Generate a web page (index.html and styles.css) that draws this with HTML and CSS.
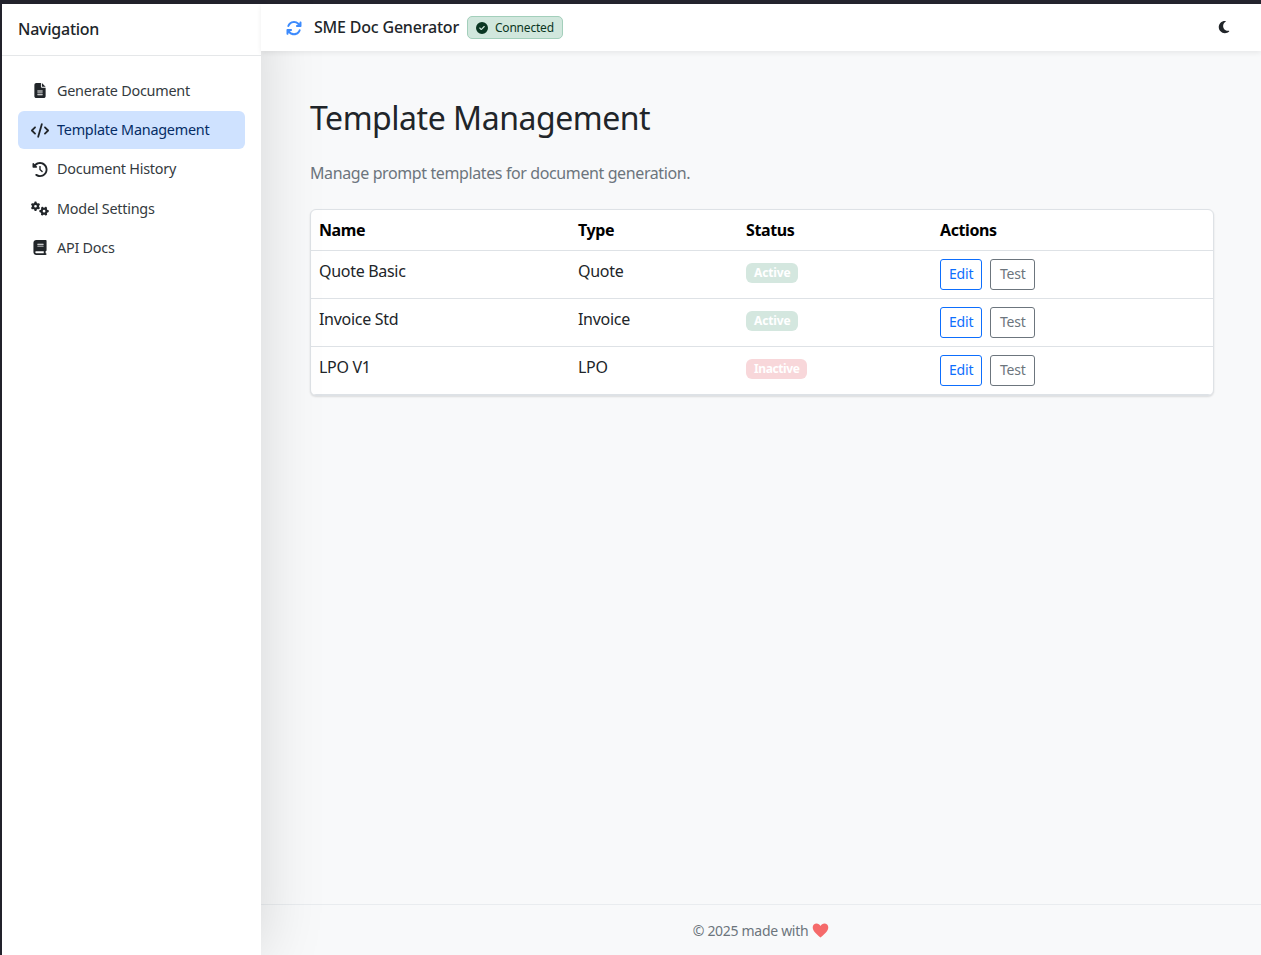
FILE: index.html
```html
<!DOCTYPE html>
<html>
<head>
    <title>SME Doc Generator</title>
    <link rel="stylesheet" href="styles.css">
</head>
<body>
    <div class="app">
        <!-- Sidebar -->
        <aside class="sidebar">
            <div class="sidebar-head">Navigation</div>
            <nav class="nav-list">
                <a class="nav-item" href="#">
                    <svg class="nav-icon" viewBox="0 0 384 512"><path d="M64 0C28.7 0 0 28.7 0 64V448c0 35.3 28.7 64 64 64H320c35.3 0 64-28.7 64-64V160H256c-17.7 0-32-14.3-32-32V0H64zM256 0V128H384L256 0zM112 256H272c8.8 0 16 7.2 16 16s-7.2 16-16 16H112c-8.8 0-16-7.2-16-16s7.2-16 16-16zm0 64H272c8.8 0 16 7.2 16 16s-7.2 16-16 16H112c-8.8 0-16-7.2-16-16s7.2-16 16-16zm0 64H272c8.8 0 16 7.2 16 16s-7.2 16-16 16H112c-8.8 0-16-7.2-16-16s7.2-16 16-16z"/></svg>
                    Generate Document
                </a>
                <a class="nav-item active" href="#">
                    <svg class="nav-icon" viewBox="0 0 640 512"><path d="M392.8 1.2c-17-4.9-34.7 5-39.6 22l-128 448c-4.9 17 5 34.7 22 39.6s34.7-5 39.6-22l128-448c4.9-17-5-34.7-22-39.6zm80.6 120.1c-12.5 12.5-12.5 32.8 0 45.3L562.7 256l-89.4 89.4c-12.5 12.5-12.5 32.8 0 45.3s32.8 12.5 45.3 0l112-112c12.5-12.5 12.5-32.8 0-45.3l-112-112c-12.5-12.5-32.8-12.5-45.3 0zm-306.7 0c-12.5-12.5-32.8-12.5-45.3 0l-112 112c-12.5 12.5-12.5 32.8 0 45.3l112 112c12.5 12.5 32.8 12.5 45.3 0s12.5-32.8 0-45.3L77.3 256l89.4-89.4c12.5-12.5 12.5-32.8 0-45.3z"/></svg>
                    Template Management
                </a>
                <a class="nav-item" href="#">
                    <svg class="nav-icon" viewBox="0 0 512 512"><path d="M75 75L41 41C25.9 25.9 0 36.6 0 57.9V168c0 13.3 10.7 24 24 24H134.1c21.4 0 32.1-25.9 17-41l-30.8-30.8C155 85.5 203 64 256 64c106 0 192 86 192 192s-86 192-192 192c-40.8 0-78.6-12.7-109.7-34.4c-14.5-10.1-34.4-6.6-44.6 7.9s-6.6 34.4 7.9 44.6C151.2 495 201.7 512 256 512c141.4 0 256-114.6 256-256S397.4 0 256 0C185.3 0 121.3 28.7 75 75zm181 53c-13.3 0-24 10.7-24 24V256c0 6.4 2.5 12.5 7 17l72 72c9.4 9.4 24.6 9.4 33.9 0s9.4-24.6 0-33.9l-65-65V152c0-13.3-10.7-24-24-24z"/></svg>
                    Document History
                </a>
                <a class="nav-item" href="#">
                    <svg class="nav-icon" viewBox="0 0 640 512"><path d="M308.5 135.3c7.1-6.3 9.9-16.2 6.2-25c-2.3-5.3-4.8-10.5-7.6-15.5L304 89.4c-3-5-6.3-9.9-9.8-14.6c-5.7-7.6-15.7-10.1-24.7-7.1l-28.2 9.3c-10.7-8.8-23-16-36.2-20.9L199 27.1c-1.9-9.3-9.1-16.7-18.5-17.8C173.9 8.4 167.2 8 160.4 8h-.7c-6.8 0-13.5 .4-20.1 1.2c-9.4 1.1-16.6 8.6-18.5 17.8L115 56.1c-13.3 5-25.5 12.1-36.2 20.9L50.5 67.8c-9-3-19-.5-24.7 7.1c-3.5 4.7-6.8 9.6-9.9 14.6l-3 5.3c-2.8 5-5.3 10.2-7.6 15.6c-3.7 8.7-.9 18.6 6.2 25l22.2 19.8C32.6 161.9 32 168.9 32 176s.6 14.1 1.7 20.9L11.5 216.7c-7.1 6.3-9.9 16.2-6.2 25c2.3 5.3 4.8 10.5 7.6 15.6l3 5.2c3 5.1 6.3 9.9 9.9 14.6c5.7 7.6 15.7 10.1 24.7 7.1l28.2-9.3c10.7 8.8 23 16 36.2 20.9l6.1 29.1c1.9 9.3 9.1 16.7 18.5 17.8c6.7 .8 13.5 1.2 20.4 1.2s13.7-.4 20.4-1.2c9.4-1.1 16.6-8.6 18.5-17.8l6.1-29.1c13.3-5 25.5-12.1 36.2-20.9l28.2 9.3c9 3 19 .5 24.7-7.1c3.5-4.7 6.8-9.5 9.8-14.6l3.1-5.4c2.8-5 5.3-10.2 7.6-15.5c3.7-8.7 .9-18.6-6.2-25l-22.2-19.8c1.1-6.8 1.7-13.8 1.7-20.9s-.6-14.1-1.7-20.9l22.2-19.8zM112 176a48 48 0 1 1 96 0 48 48 0 1 1 -96 0zM504.7 500.5c6.3 7.1 16.2 9.9 25 6.2c5.3-2.3 10.5-4.8 15.5-7.6l5.4-3.1c5-3 9.9-6.3 14.6-9.8c7.6-5.7 10.1-15.7 7.1-24.7l-9.3-28.2c8.8-10.7 16-23 20.9-36.2l29.1-6.1c9.3-1.9 16.7-9.1 17.8-18.5c.8-6.7 1.2-13.5 1.2-20.4s-.4-13.7-1.2-20.4c-1.1-9.4-8.6-16.6-17.8-18.5L583.9 307c-5-13.3-12.1-25.5-20.9-36.2l9.3-28.2c3-9 .5-19-7.1-24.7c-4.7-3.5-9.6-6.8-14.6-9.9l-5.3-3c-5-2.8-10.2-5.3-15.6-7.6c-8.7-3.7-18.6-.9-25 6.2l-19.8 22.2c-6.8-1.1-13.8-1.7-20.9-1.7s-14.1 .6-20.9 1.7l-19.8-22.2c-6.3-7.1-16.2-9.9-25-6.2c-5.3 2.3-10.5 4.8-15.6 7.6l-5.2 3c-5.1 3-9.9 6.3-14.6 9.9c-7.6 5.7-10.1 15.7-7.1 24.7l9.3 28.2c-8.8 10.7-16 23-20.9 36.2L315.1 313c-9.3 1.9-16.7 9.1-17.8 18.5c-.8 6.7-1.2 13.5-1.2 20.4s.4 13.7 1.2 20.4c1.1 9.4 8.6 16.6 17.8 18.5l29.1 6.1c5 13.3 12.1 25.5 20.9 36.2l-9.3 28.2c-3 9-.5 19 7.1 24.7c4.7 3.5 9.5 6.8 14.6 9.8l5.4 3.1c5 2.8 10.2 5.3 15.5 7.6c8.7 3.7 18.6 .9 25-6.2l19.8-22.2c6.8 1.1 13.8 1.7 20.9 1.7s14.1-.6 20.9-1.7l19.8 22.2zM464 304a48 48 0 1 1 0 96 48 48 0 1 1 0-96z"/></svg>
                    Model Settings
                </a>
                <a class="nav-item" href="#">
                    <svg class="nav-icon" viewBox="0 0 448 512"><path d="M96 0C43 0 0 43 0 96V416c0 53 43 96 96 96H384h32c17.7 0 32-14.3 32-32s-14.3-32-32-32V384c17.7 0 32-14.3 32-32V32c0-17.7-14.3-32-32-32H384 96zm0 384H352v64H96c-17.7 0-32-14.3-32-32s14.3-32 32-32zm32-240c0-8.8 7.2-16 16-16H336c8.8 0 16 7.2 16 16s-7.2 16-16 16H144c-8.8 0-16-7.2-16-16zm16 48H336c8.8 0 16 7.2 16 16s-7.2 16-16 16H144c-8.8 0-16-7.2-16-16s7.2-16 16-16z"/></svg>
                    API Docs
                </a>
            </nav>
        </aside>

        <div class="main-wrap">
            <header class="topbar">
                <svg class="sync-icon" viewBox="0 0 512 512"><path d="M142.9 142.9c62.2-62.2 162.7-62.2 224.9 0L384 160H352c-17.7 0-32 14.3-32 32s14.3 32 32 32H463.5h.4c17.7 0 32-14.3 32-32V80c0-17.7-14.3-32-32-32s-32 14.3-32 32v35.2L414.4 97.6c-87.5-87.5-229.3-87.5-316.8 0C73.2 122 55.6 150.7 44.8 181.4c-5.9 16.7 2.9 34.9 19.5 40.8s34.9-2.9 40.8-19.5c7.7-21.8 20.2-42.3 37.8-59.8zM16 312v7.6 .7V440c0 17.7 14.3 32 32 32s32-14.3 32-32V404.8l17.6 17.5c87.5 87.4 229.3 87.4 316.7 0c24.4-24.4 42.1-53.1 52.9-83.7c5.9-16.7-2.9-34.9-19.5-40.8s-34.9 2.9-40.8 19.5c-7.7 21.8-20.2 42.3-37.8 59.8c-62.2 62.2-162.7 62.2-224.9 0L128 352h32c17.7 0 32-14.3 32-32s-14.3-32-32-32H48.4h-.6C30.3 288 16 302.3 16 320v-8z"/></svg>
                <span class="app-title">SME Doc Generator</span>
                <span class="conn-badge">
                    <svg class="conn-icon" viewBox="0 0 512 512"><path d="M256 512A256 256 0 1 0 256 0a256 256 0 1 0 0 512zM369 209L241 337c-9.4 9.4-24.6 9.4-33.9 0l-64-64c-9.4-9.4-9.4-24.6 0-33.9s24.6-9.4 33.9 0l47 47L335 175c9.4-9.4 24.6-9.4 33.9 0s9.4 24.6 0 33.9z"/></svg>
                    Connected
                </span>
                <svg class="moon-icon" viewBox="0 0 384 512"><path d="M223.5 32C100 32 0 132.3 0 256S100 480 223.5 480c60.6 0 115.5-24.2 155.8-63.4c5-4.9 6.3-12.5 3.1-18.7s-10.1-9.7-17-8.5c-9.8 1.7-19.8 2.6-30.1 2.6c-96.9 0-175.5-78.8-175.5-176c0-65.8 36-123.1 89.3-153.3c6.1-3.5 9.2-10.5 7.7-17.3s-7.3-11.9-14.3-12.5c-6.3-.5-12.6-.8-19-.8z"/></svg>
            </header>

            <main class="content">
                <h1>Template Management</h1>
                <p class="lead">Manage prompt templates for document generation.</p>

                <div class="table-card">
                    <table>
                        <thead>
                            <tr>
                                <th class="col-name">Name</th>
                                <th class="col-type">Type</th>
                                <th class="col-status">Status</th>
                                <th>Actions</th>
                            </tr>
                        </thead>
                        <tbody>
                            <tr>
                                <td>Quote Basic</td>
                                <td>Quote</td>
                                <td><span class="badge badge-on">Active</span></td>
                                <td><button class="btn btn-edit">Edit</button><button class="btn btn-test">Test</button></td>
                            </tr>
                            <tr>
                                <td>Invoice Std</td>
                                <td>Invoice</td>
                                <td><span class="badge badge-on">Active</span></td>
                                <td><button class="btn btn-edit">Edit</button><button class="btn btn-test">Test</button></td>
                            </tr>
                            <tr>
                                <td>LPO V1</td>
                                <td>LPO</td>
                                <td><span class="badge badge-off">Inactive</span></td>
                                <td><button class="btn btn-edit">Edit</button><button class="btn btn-test">Test</button></td>
                            </tr>
                        </tbody>
                    </table>
                </div>
            </main>

            <footer class="footer">
                <span class="footer-text">© 2025 made with</span>
                <svg class="heart" viewBox="0 0 24 24"><path d="M12 22C9 19 1 14 1 7.500 1 4 3.600 2 6.400 2 8.800 2 10.900 3.300 12 5.500 13.100 3.300 15.200 2 17.600 2 20.400 2 23 4 23 7.500 23 14 15 19 12 22z"/></svg>
            </footer>
        </div>
    </div>
</body>
</html>
```

FILE: styles.css
```css
* {
    box-sizing: border-box;
}
html, body {
    height: 100%;
}
body {
    margin: 0;
    background: #24242e;
    padding: 4px 0 0 2px;
    overflow: hidden;
    color: #212529;
    font-family: "Noto Sans", sans-serif;
    font-size: 16px;
    line-height: 1.5;
}
.app {
    display: flex;
    height: 100%;
}

/* Sidebar */
.sidebar {
    width: 259px;
    flex-shrink: 0;
    background: #fff;
    box-shadow: 0 0 60px rgba(0, 0, 0, 0.15);
    position: relative;
    z-index: 2;
}
.sidebar-head {
    height: 52px;
    padding: 13px 16px 0;
    border-bottom: 1px solid #e5e7e9;
    font-weight: 500;
    letter-spacing: -0.25px;
}
.nav-list {
    padding: 16px;
}
.nav-item {
    display: flex;
    align-items: center;
    padding: 8px 12px 8px 13px;
    margin-bottom: 1.6px;
    border-radius: 6px;
    color: #343a40;
    font-size: 14.4px;
    letter-spacing: -0.24px;
    text-decoration: none;
}
.nav-item.active {
    background: #cfe2ff;
    color: #052c65;
}
.nav-icon {
    width: 18px;
    height: 15px;
    margin-right: 8px;
    fill: #212529;
}

/* Top bar */
.main-wrap {
    flex: 1;
    min-width: 0;
    display: flex;
    flex-direction: column;
    background: #f8f9fa;
}
.topbar {
    height: 47px;
    flex-shrink: 0;
    display: flex;
    align-items: center;
    padding: 0 31px 0 25px;
    background: #fff;
    box-shadow: 0 2px 5px rgba(0, 0, 0, 0.07);
    position: relative;
    z-index: 3;
}
.sync-icon {
    width: 16px;
    height: 16px;
    margin-right: 12px;
    fill: #3d8bfd;
}
.app-title {
    font-weight: 500;
    letter-spacing: -0.2px;
    margin-right: 8px;
    padding-bottom: 2px;
}
.conn-badge {
    display: flex;
    align-items: center;
    height: 23px;
    padding: 0 8px;
    background: #d1e7dd;
    border: 1px solid #a3cfbb;
    border-radius: 5px;
    color: #0a3622;
    font-size: 12px;
    letter-spacing: -0.2px;
}
.conn-icon {
    width: 12px;
    height: 12px;
    margin-right: 7px;
    fill: #0a3622;
}
.moon-icon {
    width: 12px;
    height: 14px;
    margin-left: auto;
    margin-bottom: 2px;
    fill: #212529;
}

/* Page content */
.content {
    flex: 1;
    padding: 48px 47px 48px 49px;
}
h1 {
    margin: 0 0 24px;
    font-size: 32px;
    font-weight: 400;
    letter-spacing: -0.47px;
    line-height: 1.2;
}
.lead {
    margin: 0 0 24px;
    color: #6c757d;
    letter-spacing: -0.39px;
}
.table-card {
    background: #fff;
    border: 1px solid #dee2e6;
    border-radius: 6px;
    overflow: hidden;
    box-shadow: 0 1px 2px rgba(0, 0, 0, 0.12);
}
table {
    width: 100%;
    border-collapse: collapse;
    table-layout: fixed;
    letter-spacing: -0.3px;
}
th, td {
    padding: 8px;
    text-align: left;
    vertical-align: top;
    border-bottom: 1px solid #dee2e6;
    color: #212529;
}
th {
    color: #000;
    letter-spacing: -0.4px;
}
.col-name {
    width: 259px;
}
.col-type {
    width: 168px;
}
.col-status {
    width: 194px;
}
.badge {
    display: inline-block;
    padding: 3px 8px;
    border-radius: 6px;
    color: #fff;
    font-size: 12px;
    font-weight: 700;
    letter-spacing: -0.15px;
    line-height: 14px;
}
.badge-on {
    background: #d4e7df;
}
.badge-off {
    background: #f8d7da;
    letter-spacing: -0.4px;
}
.btn {
    height: 31px;
    padding: 0 8px 2px;
    background: #fff;
    border: 1px solid;
    border-radius: 3px;
    font-family: inherit;
    font-size: 14px;
    letter-spacing: -0.2px;
    vertical-align: top;
}
.btn-edit {
    border-color: #0d6efd;
    color: #0d6efd;
    margin-right: 8px;
}
.btn-test {
    border-color: #6c757d;
    color: #6c757d;
    width: 45px;
}

/* Footer */
.footer {
    height: 51px;
    flex-shrink: 0;
    display: flex;
    align-items: center;
    justify-content: center;
    gap: 4px;
    border-top: 1px solid #e9ecef;
    color: #6c757d;
    font-size: 14px;
}
.footer-text {
    letter-spacing: -0.3px;
}
.heart {
    width: 17px;
    height: 17px;
    fill: #f56a6a;
}
```
